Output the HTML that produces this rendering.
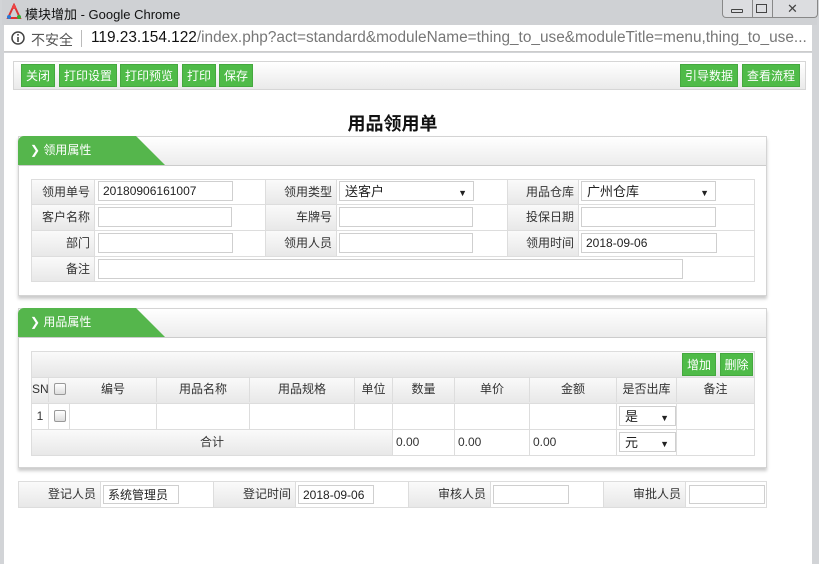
<!DOCTYPE html>
<html><head><meta charset="utf-8"><style>
*{box-sizing:border-box;margin:0;padding:0}
body{width:819px;height:564px;position:relative;overflow:hidden;background:#fff;font-family:"Liberation Sans","Noto Sans CJK SC",sans-serif;font-size:12px;color:#222}
.a{position:absolute}
.btn{position:absolute;top:64px;height:23px;background:#4fbb48;color:#fff;font-size:12px;line-height:23px;text-align:center;border:1px solid #45a83f}
.lab{position:absolute;background:linear-gradient(#fafafa,#e8e8e8);text-align:right;padding-right:4px;font-size:12px;color:#333;border-right:1px solid #ddd}
.inp{position:absolute;border:1px solid #cfcfcf;background:#fff;font-size:12px;line-height:18px;padding-left:4px;color:#222}
.cell{position:absolute;border-right:1px solid #ddd;text-align:center;font-size:12px;line-height:25px;color:#333}
.hl{position:absolute;height:1px;background:#ddd}
.tab{position:absolute;left:18px;width:150px;height:29px;background:#55b64c;clip-path:polygon(0 0,118px 0,147px 29px,0 29px);color:#fff;font-size:12px;line-height:29px;padding-left:12px;border-radius:6px 0 0 0}
.panel{position:absolute;left:18px;width:749px;border:1px solid #d4d4d4;box-shadow:0 3px 3px #ccc;background:#fff}
.ph{position:absolute;left:0;right:0;top:0;height:29px;background:linear-gradient(#fff,#ececec);border-bottom:1px solid #ccc}
.sel{position:absolute;border:1px solid #cfcfcf;background:#fff;font-size:13px;line-height:20px;padding-left:5px}
.sel i{position:absolute;right:6px;top:1px;font-style:normal;font-size:9px}
.cb{position:absolute;width:12px;height:12px;border:1px solid #999;border-radius:2px;background:linear-gradient(#fff,#ddd)}
</style></head><body>
<div class="a" style="left:0;top:0;width:819px;height:564px;background:#d2d4d7"></div>
<div class="a" style="left:2px;top:0;width:815px;height:25px;background:#cfd1d4"></div>
<svg class="a" style="left:5px;top:3px" width="18" height="18" viewBox="0 0 18 18"><path d="M9 2 L3 15 L15 15 Z" fill="none" stroke="#d33" stroke-width="2"/><circle cx="9" cy="4" r="2" fill="#e44"/><circle cx="4" cy="14" r="2" fill="#2a7ad5"/><circle cx="14" cy="14" r="2" fill="#3a3"/></svg>
<div class="a" style="left:25px;top:4px;font-size:13px;color:#111">模块增加 - Google Chrome</div>
<div class="a" style="left:722px;top:0;width:96px;height:18px;border:1px solid #888;border-top:none;border-radius:0 0 4px 4px;background:#dcdde0"></div>
<div class="a" style="left:752px;top:0;width:1px;height:18px;background:#888"></div>
<div class="a" style="left:772px;top:0;width:1px;height:18px;background:#888"></div>
<div class="a" style="left:731px;top:9px;width:12px;height:4px;border:1px solid #444;border-radius:1px"></div>
<div class="a" style="left:756px;top:4px;width:11px;height:9px;border:1px solid #444"></div>
<div class="a" style="left:787px;top:1px;font-size:13px;color:#444">✕</div>
<div class="a" style="left:4px;top:25px;width:808px;height:27px;background:#fff;border-bottom:1px solid #ccc"></div>
<svg class="a" style="left:11px;top:31px" width="14" height="14"><circle cx="7" cy="7" r="6" fill="none" stroke="#444" stroke-width="1.5"/><rect x="6.2" y="6" width="1.6" height="5" fill="#444"/><rect x="6.2" y="3" width="1.6" height="1.6" fill="#444"/></svg>
<div class="a" style="left:31px;top:30px;font-size:14px;color:#555">不安全</div>
<div class="a" style="left:81px;top:30px;width:1px;height:17px;background:#bbb"></div>
<div class="a" style="left:91px;top:29px;font-size:15.4px;color:#777;white-space:nowrap"><span style="color:#111">119.23.154.122</span>/index.php?act=standard&amp;moduleName=thing_to_use&amp;moduleTitle=menu,thing_to_use...</div>
<div class="a" style="left:4px;top:53px;width:808px;height:511px;background:#fff"></div>
<div class="a" style="left:13px;top:61px;width:793px;height:29px;border:1px solid #d6d6d6;background:linear-gradient(#fff,#eaeaea)"></div>
<div class="btn" style="left:21px;width:34px">关闭</div>
<div class="btn" style="left:59px;width:58px">打印设置</div>
<div class="btn" style="left:120px;width:58px">打印预览</div>
<div class="btn" style="left:182px;width:34px">打印</div>
<div class="btn" style="left:219px;width:34px">保存</div>
<div class="btn" style="left:680px;width:58px">引导数据</div>
<div class="btn" style="left:742px;width:58px">查看流程</div>
<div class="a" style="left:0;width:785px;top:110px;text-align:center;font-size:18px;font-weight:bold;color:#111">用品领用单</div>
<div class="panel" style="top:136px;height:160px"><div class="ph"></div></div>
<div class="tab" style="top:136px">❯ 领用属性</div>
<div class="a" style="left:31px;top:179px;width:724px;height:103px;border:1px solid #ddd"></div>
<div class="hl" style="left:31px;width:724px;top:204px"></div>
<div class="hl" style="left:31px;width:724px;top:230px"></div>
<div class="hl" style="left:31px;width:724px;top:256px"></div>
<div class="lab" style="left:32px;top:180px;width:63px;height:24px;line-height:24px">领用单号</div>
<div class="lab" style="left:32px;top:205px;width:63px;height:25px;line-height:25px">客户名称</div>
<div class="lab" style="left:32px;top:231px;width:63px;height:25px;line-height:25px">部门</div>
<div class="lab" style="left:32px;top:257px;width:63px;height:24px;line-height:24px">备注</div>
<div class="lab" style="left:265px;top:180px;width:72px;height:24px;line-height:24px;border-left:1px solid #ddd">领用类型</div>
<div class="lab" style="left:265px;top:205px;width:72px;height:25px;line-height:25px;border-left:1px solid #ddd">车牌号</div>
<div class="lab" style="left:265px;top:231px;width:72px;height:25px;line-height:25px;border-left:1px solid #ddd">领用人员</div>
<div class="lab" style="left:507px;top:180px;width:72px;height:24px;line-height:24px;border-left:1px solid #ddd">用品仓库</div>
<div class="lab" style="left:507px;top:205px;width:72px;height:25px;line-height:25px;border-left:1px solid #ddd">投保日期</div>
<div class="lab" style="left:507px;top:231px;width:72px;height:25px;line-height:25px;border-left:1px solid #ddd">领用时间</div>
<div class="inp" style="left:98px;top:181px;width:135px;height:20px">20180906161007</div>
<div class="inp" style="left:98px;top:207px;width:134px;height:20px"></div>
<div class="inp" style="left:98px;top:233px;width:135px;height:20px"></div>
<div class="inp" style="left:98px;top:259px;width:585px;height:20px"></div>
<div class="sel" style="left:339px;top:181px;width:135px;height:20px">送客户<i>▼</i></div>
<div class="inp" style="left:339px;top:207px;width:134px;height:20px"></div>
<div class="inp" style="left:339px;top:233px;width:134px;height:20px"></div>
<div class="sel" style="left:581px;top:181px;width:135px;height:20px">广州仓库<i>▼</i></div>
<div class="inp" style="left:581px;top:207px;width:135px;height:20px"></div>
<div class="inp" style="left:581px;top:233px;width:136px;height:20px">2018-09-06</div>
<div class="panel" style="top:308px;height:160px"><div class="ph"></div></div>
<div class="tab" style="top:308px">❯ 用品属性</div>
<div class="a" style="left:31px;top:351px;width:724px;height:105px;border:1px solid #ddd"></div>
<div class="a" style="left:32px;top:352px;width:722px;height:25px;background:linear-gradient(#fafafa,#e6e6e6)"></div>
<div class="btn" style="left:682px;top:353px;width:34px">增加</div>
<div class="btn" style="left:720px;top:353px;width:33px">删除</div>
<div class="a" style="left:32px;top:377px;width:722px;height:26px;background:linear-gradient(#fafafa,#e8e8e8)"></div>
<div class="a" style="left:32px;top:430px;width:361px;height:25px;background:linear-gradient(#fafafa,#e8e8e8)"></div>
<div class="hl" style="left:31px;width:724px;top:377px"></div>
<div class="hl" style="left:31px;width:724px;top:403px"></div>
<div class="hl" style="left:31px;width:724px;top:429px"></div>
<div class="cell" style="left:32px;top:377px;width:17px">SN</div>
<div class="cell" style="left:49px;top:377px;width:21px"></div>
<div class="cell" style="left:70px;top:377px;width:87px">编号</div>
<div class="cell" style="left:157px;top:377px;width:93px">用品名称</div>
<div class="cell" style="left:250px;top:377px;width:105px">用品规格</div>
<div class="cell" style="left:355px;top:377px;width:38px">单位</div>
<div class="cell" style="left:393px;top:377px;width:62px">数量</div>
<div class="cell" style="left:455px;top:377px;width:75px">单价</div>
<div class="cell" style="left:530px;top:377px;width:87px">金额</div>
<div class="cell" style="left:617px;top:377px;width:60px">是否出库</div>
<div class="cell" style="left:677px;top:377px;width:77px;border:none">备注</div>
<div class="cell" style="left:32px;top:404px;width:17px">1</div>
<div class="cell" style="left:49px;top:404px;width:21px;height:25px"></div>
<div class="cell" style="left:70px;top:404px;width:87px;height:25px"></div>
<div class="cell" style="left:157px;top:404px;width:93px;height:25px"></div>
<div class="cell" style="left:250px;top:404px;width:105px;height:25px"></div>
<div class="cell" style="left:355px;top:404px;width:38px;height:25px"></div>
<div class="cell" style="left:393px;top:404px;width:62px;height:25px"></div>
<div class="cell" style="left:455px;top:404px;width:75px;height:25px"></div>
<div class="cell" style="left:530px;top:404px;width:87px;height:25px"></div>
<div class="cell" style="left:617px;top:404px;width:60px;height:25px"></div>
<div class="cb" style="left:54px;top:383px"></div>
<div class="cb" style="left:54px;top:410px"></div>
<div class="cell" style="left:32px;top:430px;width:361px">合计</div>
<div class="cell" style="left:393px;top:430px;width:62px;text-align:left;padding-left:3px">0.00</div>
<div class="cell" style="left:455px;top:430px;width:75px;text-align:left;padding-left:3px">0.00</div>
<div class="cell" style="left:530px;top:430px;width:87px;text-align:left;padding-left:3px">0.00</div>
<div class="cell" style="left:617px;top:430px;width:60px;height:25px"></div>
<div class="sel" style="left:619px;top:406px;width:57px;height:20px">是<i>▼</i></div>
<div class="sel" style="left:619px;top:432px;width:57px;height:20px">元<i>▼</i></div>
<div class="a" style="left:18px;top:481px;width:749px;height:27px;border:1px solid #ddd"></div>
<div class="lab" style="left:19px;top:482px;width:82px;height:25px;line-height:25px">登记人员</div>
<div class="lab" style="left:213px;top:482px;width:83px;height:25px;line-height:25px;border-left:1px solid #ddd">登记时间</div>
<div class="lab" style="left:408px;top:482px;width:83px;height:25px;line-height:25px;border-left:1px solid #ddd">审核人员</div>
<div class="lab" style="left:603px;top:482px;width:83px;height:25px;line-height:25px;border-left:1px solid #ddd">审批人员</div>
<div class="inp" style="left:103px;top:485px;width:76px;height:19px">系统管理员</div>
<div class="inp" style="left:298px;top:485px;width:76px;height:19px">2018-09-06</div>
<div class="inp" style="left:493px;top:485px;width:76px;height:19px"></div>
<div class="inp" style="left:689px;top:485px;width:76px;height:19px"></div>
</body></html>
